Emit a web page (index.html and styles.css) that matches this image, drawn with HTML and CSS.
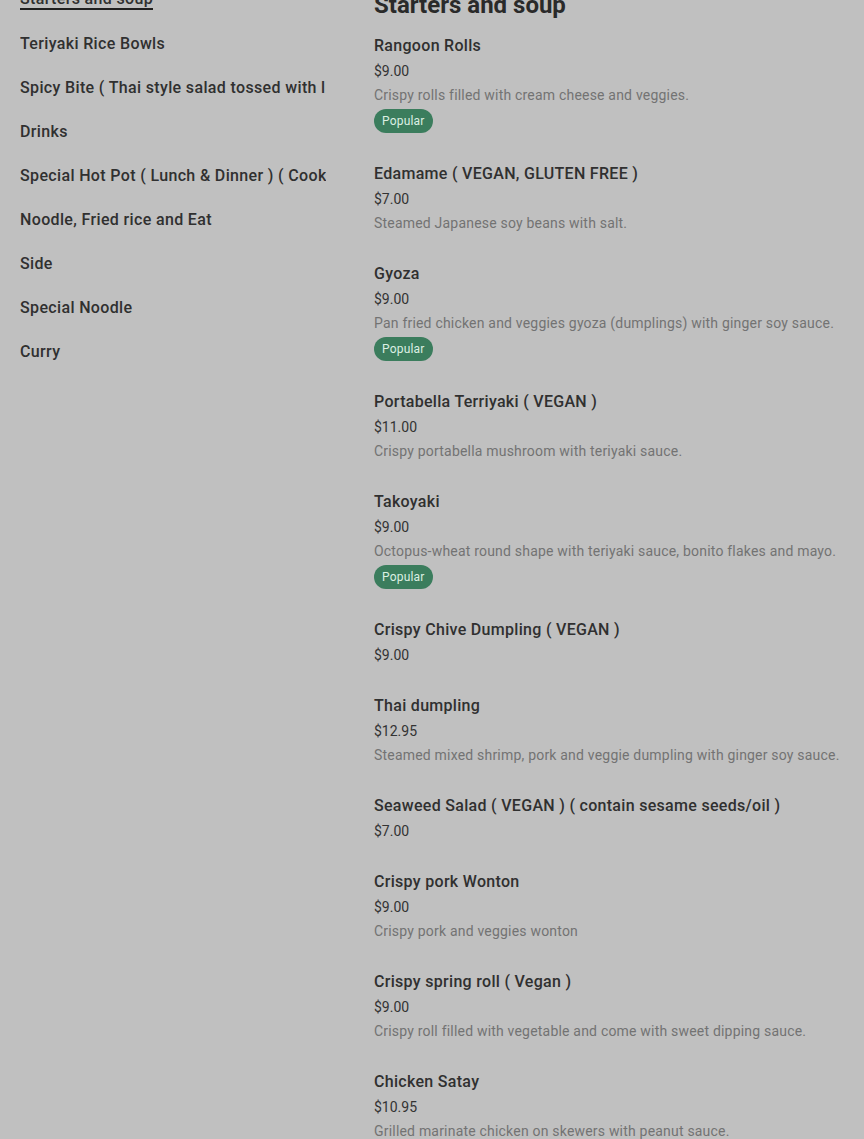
FILE: index.html
```html
<!DOCTYPE html>
<html lang="en">
<head>
    <meta charset="UTF-8">
    <meta name="viewport" content="width=device-width, initial-scale=1.0">
    <title>Menu</title>
    <link rel="stylesheet" href="styles.css">
</head>
<body>
    <div class="page">
        <nav class="categories">
            <a class="category active"><span>Starters and soup</span></a>
            <a class="category"><span>Teriyaki Rice Bowls</span></a>
            <a class="category"><span>Spicy Bite ( Thai style salad tossed with lime juice and chili )</span></a>
            <a class="category"><span>Drinks</span></a>
            <a class="category"><span>Special Hot Pot ( Lunch &amp; Dinner ) ( Cook at the table )</span></a>
            <a class="category"><span>Noodle, Fried rice and Eat</span></a>
            <a class="category"><span>Side</span></a>
            <a class="category"><span>Special Noodle</span></a>
            <a class="category"><span>Curry</span></a>
        </nav>

        <main class="menu">
            <h2 class="section-title">Starters and soup</h2>

            <div class="item">
                <div class="item-name">Rangoon Rolls</div>
                <div class="item-price">$9.00</div>
                <div class="item-desc">Crispy rolls filled with cream cheese and veggies.</div>
                <span class="badge">Popular</span>
            </div>

            <div class="item">
                <div class="item-name">Edamame ( VEGAN, GLUTEN FREE )</div>
                <div class="item-price">$7.00</div>
                <div class="item-desc">Steamed Japanese soy beans with salt.</div>
            </div>

            <div class="item">
                <div class="item-name">Gyoza</div>
                <div class="item-price">$9.00</div>
                <div class="item-desc">Pan fried chicken and veggies gyoza (dumplings) with ginger soy sauce.</div>
                <span class="badge">Popular</span>
            </div>

            <div class="item">
                <div class="item-name">Portabella Terriyaki ( VEGAN )</div>
                <div class="item-price">$11.00</div>
                <div class="item-desc">Crispy portabella mushroom with teriyaki sauce.</div>
            </div>

            <div class="item">
                <div class="item-name">Takoyaki</div>
                <div class="item-price">$9.00</div>
                <div class="item-desc">Octopus-wheat round shape with teriyaki sauce, bonito flakes and mayo.</div>
                <span class="badge">Popular</span>
            </div>

            <div class="item">
                <div class="item-name">Crispy Chive Dumpling ( VEGAN )</div>
                <div class="item-price">$9.00</div>
            </div>

            <div class="item">
                <div class="item-name">Thai dumpling</div>
                <div class="item-price">$12.95</div>
                <div class="item-desc">Steamed mixed shrimp, pork and veggie dumpling with ginger soy sauce.</div>
            </div>

            <div class="item">
                <div class="item-name">Seaweed Salad ( VEGAN ) ( contain sesame seeds/oil )</div>
                <div class="item-price">$7.00</div>
            </div>

            <div class="item">
                <div class="item-name">Crispy pork Wonton</div>
                <div class="item-price">$9.00</div>
                <div class="item-desc">Crispy pork and veggies wonton</div>
            </div>

            <div class="item">
                <div class="item-name">Crispy spring roll ( Vegan )</div>
                <div class="item-price">$9.00</div>
                <div class="item-desc">Crispy roll filled with vegetable and come with sweet dipping sauce.</div>
            </div>

            <div class="item">
                <div class="item-name">Chicken Satay</div>
                <div class="item-price">$10.95</div>
                <div class="item-desc">Grilled marinate chicken on skewers with peanut sauce.</div>
            </div>
        </main>
    </div>
</body>
</html>
```

FILE: styles.css
```css
body {
    margin: 0;
    font-family: Roboto, "Liberation Sans", sans-serif;
    background-color: #c0c0c0;
    color: #2e2e2e;
    overflow: hidden;
}

/* page is shown scrolled down a little */
.page {
    display: flex;
    gap: 48px;
    padding: 0 20px;
    margin-top: -23px;
}

.categories {
    width: 306px;
    flex-shrink: 0;
    display: flex;
    flex-direction: column;
    overflow: hidden;
}

.category {
    padding: 12px 0;
    font-size: 16px;
    font-weight: 500;
    line-height: 20px;
    letter-spacing: 0.35px;
    white-space: nowrap;
    color: #303030;
    cursor: pointer;
}

.category span {
    display: inline-block;
    line-height: 18px;
}

.category.active span {
    border-bottom: 2px solid #1f1f1f;
}

.menu {
    flex: 1;
    display: flex;
    flex-direction: column;
    gap: 27px;
    padding-top: 12px;
}

.section-title {
    margin: 0 0 -14px;
    font-size: 24px;
    font-weight: 700;
    line-height: 32px;
    color: #2a2a2a;
}

.item {
    display: flex;
    flex-direction: column;
    align-items: flex-start;
}

.item-name {
    font-size: 16px;
    font-weight: 500;
    line-height: 24px;
    letter-spacing: 0.3px;
    color: #303030;
}

.item-price {
    margin-top: 1px;
    font-size: 14px;
    line-height: 24px;
    color: #333333;
}

.item-desc {
    font-size: 14px;
    line-height: 24px;
    letter-spacing: 0.2px;
    color: #737373;
}

.badge {
    margin: 2px 0;
    padding: 0 8px;
    height: 24px;
    line-height: 24px;
    border-radius: 12px;
    font-size: 12px;
    letter-spacing: 0.2px;
    background-color: #3b7d5d;
    color: #dcefe3;
}
```
